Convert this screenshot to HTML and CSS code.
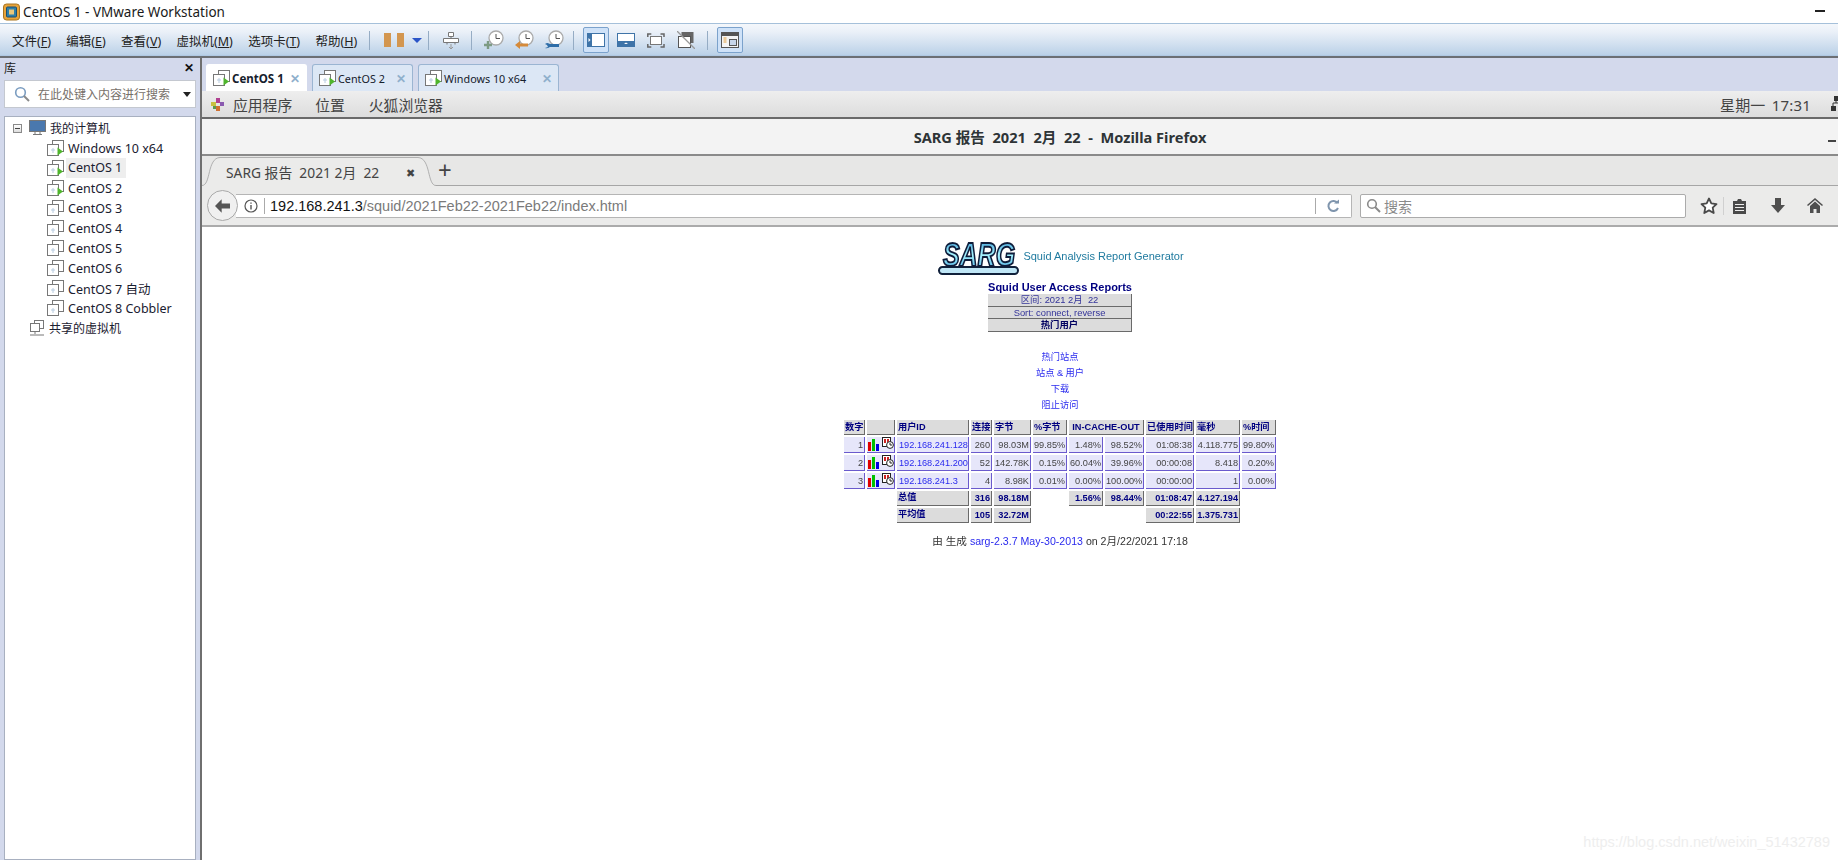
FILE: index.html
```html
<!DOCTYPE html>
<html lang="zh">
<head>
<meta charset="utf-8">
<title>CentOS 1 - VMware Workstation</title>
<link rel="stylesheet" href="styles.css">
</head>
<body>
<svg class="defs" width="0" height="0">
  <defs>
    <symbol id="vm" viewBox="0 0 18 18">
      <rect x="6.5" y="1.5" width="11" height="11" fill="#fff" stroke="#777"/>
      <rect x="1.5" y="5.5" width="11" height="11" fill="#fff" stroke="#777"/>
      <path d="M5 11h4M7 9v5" stroke="#b8cce0" fill="none"/>
    </symbol>
    <symbol id="vmrun" viewBox="0 0 18 18">
      <rect x="6.5" y="1.5" width="11" height="11" fill="#fff" stroke="#777"/>
      <rect x="1.5" y="5.5" width="11" height="11" fill="#fff" stroke="#777"/>
      <path d="M5 11h4M7 9v5" stroke="#b8cce0" fill="none"/>
      <path d="M11.500 8.500l5.500 4-5.500 4z" fill="#4fb52c"/>
    </symbol>
    <symbol id="clock" viewBox="0 0 20 20">
      <circle cx="12" cy="8" r="7" fill="#fff" stroke="#aaa" stroke-width="1.3"/>
      <path d="M12 4v4.500h4" stroke="#555" fill="none"/>
    </symbol>
    <symbol id="report" viewBox="0 0 12 12">
      <rect x="0.5" y="0.5" width="8" height="9" fill="#fff" stroke="#222"/>
      <rect x="2" y="2" width="2" height="4" fill="#c22"/>
      <rect x="5" y="2" width="2" height="4" fill="#c22"/>
      <circle cx="8" cy="8" r="3.4" fill="#fff" stroke="#222"/>
      <path d="M8 6v2h2" stroke="#222" fill="none"/>
    </symbol>
    <symbol id="bars" viewBox="0 0 12 12">
      <rect x="0" y="3" width="3" height="9" fill="#e00000"/>
      <rect x="4" y="0" width="3" height="12" fill="#00c000"/>
      <rect x="8" y="5" width="3" height="7" fill="#0000e0"/>
    </symbol>
    <linearGradient id="sargfill" x1="0" y1="0" x2="0" y2="1">
      <stop offset="0" stop-color="#2a8fd0"/>
      <stop offset="0.5" stop-color="#a8f4ff"/>
      <stop offset="1" stop-color="#3aa0dc"/>
    </linearGradient>
  </defs>
</svg>

<header class="titlebar">
  <svg class="applogo" width="17" height="18" viewBox="0 0 17 18">
    <rect x="0.5" y="1" width="16" height="16" rx="3" fill="#e8a33a" stroke="#a87420"/>
    <rect x="3.5" y="4" width="10" height="10" rx="1" fill="#2f7fa8" stroke="#1c4f70"/>
    <rect x="6" y="6.5" width="5" height="5" fill="#e9c77c"/>
  </svg>
  <span class="apptitle">CentOS 1 - VMware Workstation</span>
  <span class="winmin"></span>
</header>

<nav class="toolbar">
  <ul class="menu">
    <li>文件(<u>F</u>)</li><li>编辑(<u>E</u>)</li><li>查看(<u>V</u>)</li><li>虚拟机(<u>M</u>)</li><li>选项卡(<u>T</u>)</li><li>帮助(<u>H</u>)</li>
  </ul>
  <i class="sep sep-a"></i>
  <span class="pause"><b></b><b></b></span>
  <span class="drop"></span>
  <i class="sep sep-b"></i>
  <svg class="ti ti-send" width="18" height="20" viewBox="0 0 18 20"><path d="M6.500 1.500h5v4h-5zM1.500 7.500h15v4h-15zM9 5.500v2M5 11.500v2M13 11.500v2" fill="#fff" stroke="#777"/><path d="M9 13v5M7 16l2 2 2-2" stroke="#999" fill="none"/></svg>
  <i class="sep sep-c"></i>
  <svg class="ti ti-c1" width="20" height="20"><use href="#clock"/><path d="M4 11v8M0 15h8" stroke="#7d9b84" stroke-width="2.400"/></svg>
  <svg class="ti ti-c2" width="20" height="20"><use href="#clock"/><path d="M1 15l5-4v2.500h8v3H6V19z" fill="#d58a3a"/></svg>
  <svg class="ti ti-c3" width="20" height="20"><use href="#clock"/><path d="M1 14c3-2 4 0 5 0h9v3H6c-1 0-2 2-5 1l3-1-1-2z" fill="#2f6ea8"/></svg>
  <i class="sep sep-d"></i>
  <span class="tbtn on"><svg width="18" height="14" viewBox="0 0 18 14"><rect width="18" height="14" fill="#3f74a8"/><rect x="5" y="1" width="12" height="12" fill="#fff"/><path d="M1.500 5l2 2-2 2z" fill="#fff"/></svg></span>
  <svg class="ti ti-v2" width="18" height="14" viewBox="0 0 18 14"><rect width="18" height="14" fill="#3f74a8"/><rect x="1" y="1" width="16" height="7" fill="#fff"/><path d="M7 11l2-1.500 2 1.500z" fill="#fff"/></svg>
  <svg class="ti ti-v3" width="18" height="15" viewBox="0 0 18 15"><rect x="3.500" y="3.500" width="11" height="8" fill="#fff" stroke="#777"/><path d="M.8 4V1h3.500M13.500 1H17v3M17 11v3h-3.500M4.300 14H.8v-3" fill="none" stroke="#666" stroke-width="1.500"/></svg>
  <svg class="ti ti-v4" width="18" height="18" viewBox="0 0 18 18"><rect x="4.500" y="1" width="12" height="11" fill="#666"/><rect x="1.500" y="5.500" width="12" height="11" fill="#fff" stroke="#555"/><path d="M0 0l18 18" stroke="#999" stroke-width="1.300"/></svg>
  <i class="sep sep-e"></i>
  <span class="tbtn on"><svg width="18" height="16" viewBox="0 0 18 16"><rect x=".5" y=".5" width="17" height="15" fill="#f4f4f4" stroke="#555"/><rect x="1" y="1" width="16" height="3" fill="#555"/><path d="M2.500 6h3M2.500 8h3M2.500 10h3" stroke="#e0a040"/><rect x="8.500" y="7.500" width="7" height="6" fill="#c7d6ea" stroke="#555"/></svg></span>
</nav>

<div class="workspace">
  <aside class="library">
    <div class="libhead"><span>库</span><span class="libclose">✕</span></div>
    <div class="libsearch">
      <svg width="16" height="16" viewBox="0 0 16 16"><circle cx="6.500" cy="6.500" r="4.800" fill="none" stroke="#7a9cc0" stroke-width="1.600"/><path d="M10 10l5 5" stroke="#8a8a8a" stroke-width="2"/></svg>
      <span class="libph">在此处键入内容进行搜索</span>
      <span class="libdrop"></span>
    </div>
    <div class="tree">
      <div class="node root"><span class="toggle"></span>
        <svg class="nodeicon" width="17" height="16" viewBox="0 0 17 16"><rect x=".5" y=".5" width="16" height="11" fill="#4a78ae" stroke="#777"/><path d="M6 12v2M11 12v2M4 14.500h9" stroke="#777" fill="none"/></svg>
        <span>我的计算机</span></div>
      <div class="node"><svg class="vmicon" width="18" height="18"><use href="#vmrun"/></svg><span>Windows 10 x64</span></div>
      <div class="node"><svg class="vmicon" width="18" height="18"><use href="#vmrun"/></svg><span class="cur">CentOS 1</span></div>
      <div class="node"><svg class="vmicon" width="18" height="18"><use href="#vmrun"/></svg><span>CentOS 2</span></div>
      <div class="node"><svg class="vmicon" width="18" height="18"><use href="#vm"/></svg><span>CentOS 3</span></div>
      <div class="node"><svg class="vmicon" width="18" height="18"><use href="#vm"/></svg><span>CentOS 4</span></div>
      <div class="node"><svg class="vmicon" width="18" height="18"><use href="#vm"/></svg><span>CentOS 5</span></div>
      <div class="node"><svg class="vmicon" width="18" height="18"><use href="#vm"/></svg><span>CentOS 6</span></div>
      <div class="node"><svg class="vmicon" width="18" height="18"><use href="#vm"/></svg><span>CentOS 7 自动</span></div>
      <div class="node"><svg class="vmicon" width="18" height="18"><use href="#vm"/></svg><span>CentOS 8 Cobbler</span></div>
      <div class="node root shared">
        <svg class="nodeicon" width="15" height="16" viewBox="0 0 15 16"><rect x="4.500" y=".5" width="9" height="8" fill="#fff" stroke="#777"/><rect x=".5" y="3.500" width="9" height="8" fill="#fff" stroke="#777"/><path d="M5 12v2M0 15h14" stroke="#777" fill="none"/></svg>
        <span>共享的虚拟机</span></div>
    </div>
  </aside>

  <main class="vmpane">
    <div class="vmtabs">
      <div class="vmtab active"><svg width="18" height="18"><use href="#vmrun"/></svg><span class="vmname">CentOS 1</span><span class="vmx">✕</span></div>
      <div class="vmtab"><svg width="18" height="18"><use href="#vmrun"/></svg><span class="vmname">CentOS 2</span><span class="vmx">✕</span></div>
      <div class="vmtab wide"><svg width="18" height="18"><use href="#vmrun"/></svg><span class="vmname">Windows 10 x64</span><span class="vmx">✕</span></div>
    </div>
    <div class="guest">
      <div class="gnomebar">
        <svg class="gnomefoot" width="15" height="15" viewBox="0 0 15 15"><rect x="1" y="5" width="5" height="4" fill="#c9c040"/><rect x="6" y="1" width="4" height="5" fill="#b04090"/><rect x="10" y="5" width="4" height="4" fill="#8a5ab0"/><rect x="6" y="9" width="4" height="5" fill="#d07030"/><rect x="3" y="9" width="3" height="3" fill="#5a9a50"/></svg>
        <span class="gn g1">应用程序</span><span class="gn g2">位置</span><span class="gn g3">火狐浏览器</span>
        <span class="clock">星期一 17:31</span>
        <svg class="netic" width="16" height="16" viewBox="0 0 16 16"><rect x="0" y="10" width="5" height="5" fill="#333"/><rect x="3" y="0" width="5" height="5" fill="#333"/><path d="M2 10V7h8M5 5v2" stroke="#333" fill="none"/></svg>
      </div>
      <div class="fftitle"><span>SARG 报告&nbsp; 2021&nbsp; 2月&nbsp; 22&nbsp; -&nbsp; Mozilla Firefox</span><i class="ffmin"></i></div>
      <div class="fftabs">
        <div class="fftab">
          <svg class="tabcurve" width="18" height="29" viewBox="0 0 18 29"><path d="M0 28.500C9 28.500 5 1 18 .5V29H0z" fill="#ebebea"/><path d="M0 28.500C9 28.500 5 1 18 .5" fill="none" stroke="#b0b0b0"/></svg>
          <div class="tabmid"><span class="fftabtext">SARG 报告&nbsp; 2021 2月&nbsp; 22</span><span class="fftabx">✖</span></div>
          <svg class="tabcurve" width="18" height="29" viewBox="0 0 18 29"><path d="M18 28.500C9 28.500 13 1 0 .5V29H18z" fill="#ebebea"/><path d="M18 28.500C9 28.500 13 1 0 .5" fill="none" stroke="#b0b0b0"/></svg>
        </div>
        <span class="ffplus">+</span>
      </div>
      <div class="ffnav">
        <span class="back"><svg width="15" height="14" viewBox="0 0 18 16"><path d="M8 0L0 8l8 8v-5h10V5H8z" fill="#555"/></svg></span>
        <div class="urlbar">
          <svg class="info" width="14" height="14" viewBox="0 0 14 14"><circle cx="7" cy="7" r="6" fill="none" stroke="#555" stroke-width="1.200"/><path d="M7 6v4.500M7 3.500v1.300" stroke="#555" stroke-width="1.400"/></svg>
          <i class="ubar"></i>
          <span class="url"><b>192.168.241.3</b>/squid/2021Feb22-2021Feb22/index.html</span>
          <i class="ubar right"></i>
          <svg class="reload" width="14" height="14" viewBox="0 0 14 14"><path d="M11.500 4A5 5 0 1 0 12 9" fill="none" stroke="#7f95ad" stroke-width="2"/><path d="M8 4.500h5v-4z" fill="#7f95ad"/></svg>
        </div>
        <div class="searchbar">
          <svg width="15" height="15" viewBox="0 0 15 15"><circle cx="6" cy="6" r="4.300" fill="none" stroke="#8a8a8a" stroke-width="1.600"/><path d="M9 9l5 5" stroke="#8a8a8a" stroke-width="2"/></svg>
          <span>搜索</span>
        </div>
        <svg class="ff star" width="18" height="17" viewBox="0 0 18 17"><path d="M9 1.500l2.300 4.900 5.200.7-3.800 3.600 1 5.300L9 13.400 4.300 16l1-5.300L1.500 7.100l5.200-.7z" fill="#fff" stroke="#4a4a4a" stroke-width="1.800" stroke-linejoin="round"/></svg>
        <i class="ffsep"></i>
        <svg class="ff clip" width="15" height="16" viewBox="0 0 15 16"><path d="M1 3h4l1-2h3l1 2h4v13H1z" fill="#4a4a4a"/><path d="M3 6.500h9M3 9.500h9M3 12.500h9" stroke="#eee"/></svg>
        <svg class="ff down" width="16" height="15" viewBox="0 0 16 15"><path d="M5 0h6v7h4l-7 8-7-8h4z" fill="#4f4f4f"/></svg>
        <svg class="ff home" width="16" height="15" viewBox="0 0 16 15"><path d="M8 0L0 7l1 1 7-6 7 6 1-1zM8 3.500L3 8v7h3.500v-4h3v4H13V8z" fill="#4f4f4f"/></svg>
      </div>

      <div class="report">
        <div class="brand">
          <svg width="81" height="40" viewBox="0 0 81 40" class="sarglogo">
            <rect x="1" y="31" width="79" height="7" rx="3.500" fill="#bfe6f6" stroke="#10203a" stroke-width="2"/>
            <text transform="translate(41 30) scale(1 1.300)" text-anchor="middle" class="sargtext">SARG</text>
          </svg>
          <span class="tagline">Squid Analysis Report Generator</span>
        </div>
        <div class="rtitle">Squid User Access Reports</div>
        <div class="rinfo">区间: 2021 2月&nbsp; 22</div>
        <div class="rinfo short">Sort: connect, reverse</div>
        <div class="rinfo strong">热门用户</div>
        <ul class="rlinks">
          <li>热门站点</li><li>站点 &amp; 用户</li><li>下载</li><li>阻止访问</li>
        </ul>
        <table class="rtable">
          <colgroup>
            <col class="c21"><col class="c28"><col class="c72"><col class="c21"><col class="c37"><col class="c34"><col class="c34"><col class="c39"><col class="c48"><col class="c44"><col class="c34">
          </colgroup>
          <tr class="rh">
            <th>数字</th><th></th><th>用户ID</th><th>连接</th><th>字节</th><th>%字节</th><th colspan="2" class="cache">IN-CACHE-OUT</th><th>已使用时间</th><th>毫秒</th><th>%时间</th>
          </tr>
          <tr class="rd">
            <td>1</td><td class="ic"><svg width="12" height="12"><use href="#bars"/></svg><svg class="rep" width="12" height="12"><use href="#report"/></svg></td><td class="usr">192.168.241.128</td><td>260</td><td>98.03M</td><td>99.85%</td><td>1.48%</td><td>98.52%</td><td>01:08:38</td><td>4.118.775</td><td>99.80%</td>
          </tr>
          <tr class="rd">
            <td>2</td><td class="ic"><svg width="12" height="12"><use href="#bars"/></svg><svg class="rep" width="12" height="12"><use href="#report"/></svg></td><td class="usr">192.168.241.200</td><td>52</td><td>142.78K</td><td>0.15%</td><td>60.04%</td><td>39.96%</td><td>00:00:08</td><td>8.418</td><td>0.20%</td>
          </tr>
          <tr class="rd">
            <td>3</td><td class="ic"><svg width="12" height="12"><use href="#bars"/></svg><svg class="rep" width="12" height="12"><use href="#report"/></svg></td><td class="usr">192.168.241.3</td><td>4</td><td>8.98K</td><td>0.01%</td><td>0.00%</td><td>100.00%</td><td>00:00:00</td><td>1</td><td>0.00%</td>
          </tr>
          <tr class="rt">
            <td colspan="2" class="blank"></td><th class="lab">总值</th><th>316</th><th>98.18M</th><td class="blank"></td><th>1.56%</th><th>98.44%</th><th>01:08:47</th><th>4.127.194</th><td class="blank"></td>
          </tr>
          <tr class="rt">
            <td colspan="2" class="blank"></td><th class="lab">平均值</th><th>105</th><th>32.72M</th><td colspan="3" class="blank"></td><th>00:22:55</th><th>1.375.731</th><td class="blank"></td>
          </tr>
        </table>
        <div class="rfoot">由 生成 <span class="flink">sarg-2.3.7 May-30-2013</span> on 2月/22/2021 17:18</div>
      </div>
    </div>
    <div class="watermark">https://blog.csdn.net/weixin_51432789</div>
  </main>
</div>
</body>
</html>
```

FILE: styles.css
```css
* { box-sizing: border-box; }
html, body { margin: 0; height: 860px; width: 1838px; overflow: hidden; background: #fff; }
body { font-family: "Noto Sans", "Noto Sans CJK SC", sans-serif; color: #111; display: flex; flex-direction: column; }
.defs { position: absolute; }
ul { list-style: none; margin: 0; padding: 0; }
u { text-decoration: underline; }

.titlebar { height: 23px; flex: none; background: #fff; display: flex; align-items: center; padding: 0 3px; }
.apptitle { margin-left: 3px; font-size: 13.5px; color: #1a1a1a; white-space: nowrap; }
.winmin { margin-left: auto; margin-right: 10px; margin-top: -1px; width: 10px; height: 1.500px; background: #222; }
.applogo { flex: none; }

.toolbar { height: 35px; flex: none; display: flex; align-items: center; background: linear-gradient(#f4f7fb, #eaf0f8 25%, #bcd2e8 95%, #a9c4e0); border-top: 1px solid #a5c0da; border-bottom: 2px solid #6b6f74; padding-left: 12px; }
.menu { display: flex; font-size: 12.500px; white-space: nowrap; width: 357px; flex: none; color: #222; }
.menu li { margin-right: 15.300px; }
.sep { width: 1px; height: 19px; background: #95acc4; flex: none; }
.pause { display: flex; gap: 6px; margin-left: 14px; flex: none; }
.pause b { width: 7px; height: 14px; background: #d3964f; display: block; }
.drop { margin-left: 8px; width: 0; height: 0; border: 5px solid transparent; border-top: 5px solid #2b55c8; border-bottom: 0; flex: none; }
.sep-b { margin-left: 6px; }
.ti { flex: none; display: block; }
.ti-send { margin-left: 13px; margin-top: 2px; }
.sep-c { margin-left: 11px; }
.ti-c1 { margin-left: 12px; }
.ti-c2 { margin-left: 10px; }
.ti-c3 { margin-left: 10px; }
.sep-d { margin-left: 9px; }
.tbtn { flex: none; width: 26px; height: 26px; display: flex; align-items: center; justify-content: center; }
.tbtn.on { background: #cfe2f8; border: 1px solid #7ba2cc; border-radius: 2px; }
.sep-d + .tbtn { margin-left: 9px; }
.ti-v2 { margin-left: 8px; }
.ti-v3 { margin-left: 12px; }
.ti-v4 { margin-left: 12px; }
.sep-e { margin-left: 12px; }
.sep-e + .tbtn { margin-left: 9px; }

.workspace { flex: 1; display: flex; min-height: 0; }
.library { width: 200px; flex: none; background: #d3d9ec; display: flex; flex-direction: column; padding: 0 4px; }
.libhead { height: 22px; display: flex; align-items: center; justify-content: space-between; font-size: 12px; padding: 0 2px 3px 0; color: #222; }
.libclose { font-size: 12px; font-weight: 700; color: #111; }
.libsearch { height: 28px; background: #fff; border: 1px solid #c4c8d0; display: flex; align-items: center; padding-left: 9px; flex: none; }
.libph { margin-left: 8px; font-size: 12px; color: #77706a; white-space: nowrap; }
.libdrop { margin-left: auto; margin-right: 4px; width: 0; height: 0; border: 4px solid transparent; border-top: 5px solid #222; border-bottom: 0; }
.tree { margin-top: 8px; flex: 1; background: #fff; border: 1px solid #a8b0c0; padding-top: 1px; font-size: 12.500px; }
.node { height: 20px; display: flex; align-items: center; padding-left: 42px; white-space: nowrap; color: #1a2030; }
.node .cur { background: #eeeeee; margin-left: -2px; padding: 0 4px 0 2px; height: 20px; line-height: 20px; }
.vmicon { margin-right: 4px; margin-left: -1px; flex: none; }
.node.root { padding-left: 8px; font-size: 12px; }
.toggle { width: 9px; height: 9px; border: 1px solid #8a8a8a; background: linear-gradient(#fff, #ddd); margin-right: 7px; flex: none; }
.toggle::after { content: ""; display: block; margin: 3px 1px 0; height: 1px; background: #444; }
.nodeicon { margin-right: 4px; flex: none; }
.node.shared { padding-left: 25px; }

.vmpane { flex: 1; min-width: 0; display: flex; flex-direction: column; position: relative; border-left: 2px solid #6f6f6f; background: #fff; }
.vmtabs { height: 33px; flex: none; background: #d3d9ec; display: flex; align-items: flex-end; padding-left: 4px; gap: 5px; }
.vmtab { width: 101px; height: 27px; background: #dce7f5; border: 1px solid #9bb5d2; border-bottom: 0; border-radius: 3px 3px 0 0; display: flex; align-items: center; padding-left: 5px; font-size: 10.800px; }
.vmtab.active { background: #fff; border-color: #fff; font-weight: 700; font-size: 11.500px; }
.vmtab.wide { width: 141px; }
.vmname { margin-left: 2px; white-space: nowrap; color: #15202c; }
.vmx { margin-left: auto; margin-right: 6px; color: #8fb0cc; font-size: 12px; font-weight: 700; }

.guest { flex: 1; width: 1716px; overflow: hidden; display: flex; flex-direction: column; min-height: 0; }
.gnomebar { height: 28px; flex: none; background: linear-gradient(#eeeeee, #dddddd); border-bottom: 2px solid #6a6a6a; display: flex; align-items: center; padding: 0 71px 0 8px; font-size: 14.800px; color: #444; white-space: nowrap; }
.gnomefoot { flex: none; }
.gn { flex: none; }
.g1 { margin-left: 8px; }
.g2 { margin-left: 23px; }
.g3 { margin-left: 24px; }
.clock { margin-left: auto; font-size: 15px; word-spacing: 2px; letter-spacing: 0.200px; }
.netic { margin-left: 20px; flex: none; }

.fftitle { height: 37px; flex: none; background: #f3f3f3; border-bottom: 2px solid #8a8a8a; display: flex; align-items: center; justify-content: center; font-size: 14.600px; font-weight: 700; color: #2e3436; position: relative; }
.ffmin { position: absolute; left: 1626px; top: 21px; width: 8px; height: 2px; background: #444; }
.fftabs { height: 30px; flex: none; background: #e7e7e6; border-bottom: 1px solid #a6a6a6; display: flex; align-items: flex-end; }
.fftab { height: 29px; margin-bottom: -1px; display: flex; flex: none; }
.tabcurve { flex: none; display: block; }
.tabmid { width: 198px; background: #ebebea; border-top: 1px solid #b0b0b0; display: flex; align-items: center; padding-left: 6px; font-size: 13.800px; color: #444; white-space: nowrap; }
.fftabtext { width: 180px; flex: none; }
.fftabx { font-size: 11px; color: #444; }
.ffplus { margin-left: 2px; margin-bottom: 1px; font-size: 24px; line-height: 28px; color: #444; font-weight: 400; }
.ffnav { height: 41px; flex: none; background: #ebebea; border-bottom: 2px solid #ababab; display: flex; align-items: center; padding-left: 5px; }
.back { width: 31px; height: 31px; border-radius: 50%; background: #f0f0f0; border: 1px solid #a9a9a9; display: flex; align-items: center; justify-content: center; flex: none; position: relative; z-index: 1; }
.urlbar { margin-left: -2px; width: 1116px; height: 24px; background: #fff; border: 1px solid #b5b5b5; border-left: 0; border-radius: 0 2px 2px 0; display: flex; align-items: center; padding-left: 8px; flex: none; }
.info { flex: none; }
.ubar { width: 1px; height: 16px; background: #aaa; margin-left: 6px; flex: none; }
.ubar.right { margin-left: auto; }
.url { margin-left: 5px; font-family: "Liberation Sans", sans-serif; font-size: 14.500px; color: #7a7a7a; white-space: nowrap; }
.url b { font-weight: 400; color: #111; }
.reload { margin-left: 10px; margin-right: 11px; flex: none; }
.searchbar { margin-left: 8px; width: 326px; height: 24px; background: #fff; border: 1px solid #ababab; border-radius: 2px; display: flex; align-items: center; padding-left: 5px; font-size: 14px; color: #8a8a8a; flex: none; }
.searchbar span { margin-left: 3px; }
.ff { flex: none; display: block; }
.star { margin-left: 14px; }
.ffsep { width: 1px; height: 18px; background: #d0d0d0; margin-left: 5px; flex: none; }
.clip { margin-left: 8px; }
.down { margin-left: 23px; }
.home { margin-left: 21px; }

.report { flex: 1; background: #fff; display: flex; flex-direction: column; align-items: center; font-family: "Liberation Sans", "Noto Sans CJK SC", sans-serif; filter: blur(0.3px); }
.brand { margin-top: 9px; height: 40px; display: flex; align-items: center; margin-left: 2px; }
.sarglogo { flex: none; overflow: visible; }
.sargtext { font-family: "Liberation Sans", sans-serif; font-style: italic; font-weight: 700; font-size: 25px; fill: url(#sargfill); stroke: #0e1c3a; stroke-width: 1.500px; }
.tagline { margin-left: 4px; margin-top: -1px; font-size: 11px; color: #1f7a9f; white-space: nowrap; }
.rtitle { margin-top: 5px; font-size: 11px; line-height: 13px; font-weight: 700; color: #000080; white-space: nowrap; }
.rinfo { width: 144px; height: 13px; background: #dcdcdc; border-right: 1px solid #6a6a6a; border-bottom: 1px solid #6a6a6a; text-align: center; font-size: 9.400px; line-height: 12px; color: #333399; white-space: nowrap; }
.rinfo.short { height: 12px; line-height: 11px; }
.rinfo.strong { color: #000060; font-weight: 700; }
.rlinks { margin-top: 17px; text-align: center; font-size: 9.200px; line-height: 16px; color: #2a2aee; }
.rtable { margin-top: 5px; border-collapse: separate; border-spacing: 2px; table-layout: fixed; width: 436px; font-size: 9.200px; line-height: 12px; }
.c21 { width: 21px; } .c28 { width: 28px; } .c72 { width: 72px; } .c37 { width: 37px; } .c34 { width: 34px; } .c39 { width: 39px; } .c48 { width: 48px; } .c44 { width: 44px; }
.rtable th, .rtable td { padding: 0 1px; overflow: hidden; white-space: nowrap; }
.rtable th { background: #dcdcdc; border-right: 1px solid #6a6a6a; border-bottom: 1px solid #6a6a6a; color: #000080; font-weight: 700; text-align: left; }
.rh th { height: 15px; }
.rd td { height: 16px; background: #e6e6fa; border-right: 1px solid #6a5acd; border-bottom: 1px solid #6a5acd; color: #444; text-align: right; }
.rd .usr { text-align: left; color: #2a2aee; padding-left: 2px; }
.rd .ic { text-align: left; padding: 0 0 0 1px; }
.ic svg { vertical-align: middle; }
.rep { margin-left: 2px; margin-top: -3px; }
.rt th { height: 15px; text-align: right; }
.rt th.lab { text-align: left; vertical-align: top; }
.rtable .cache { text-align: center; }
.rtable td.blank { background: transparent; border: 0; }
.rfoot { margin-top: 8px; font-size: 10.600px; line-height: 16px; color: #333; white-space: nowrap; }
.flink { color: #2a2aee; }

.watermark { position: absolute; right: 8px; bottom: 10px; font-family: "Liberation Sans", sans-serif; font-size: 14.500px; color: #eeeeee; white-space: nowrap; }
```
